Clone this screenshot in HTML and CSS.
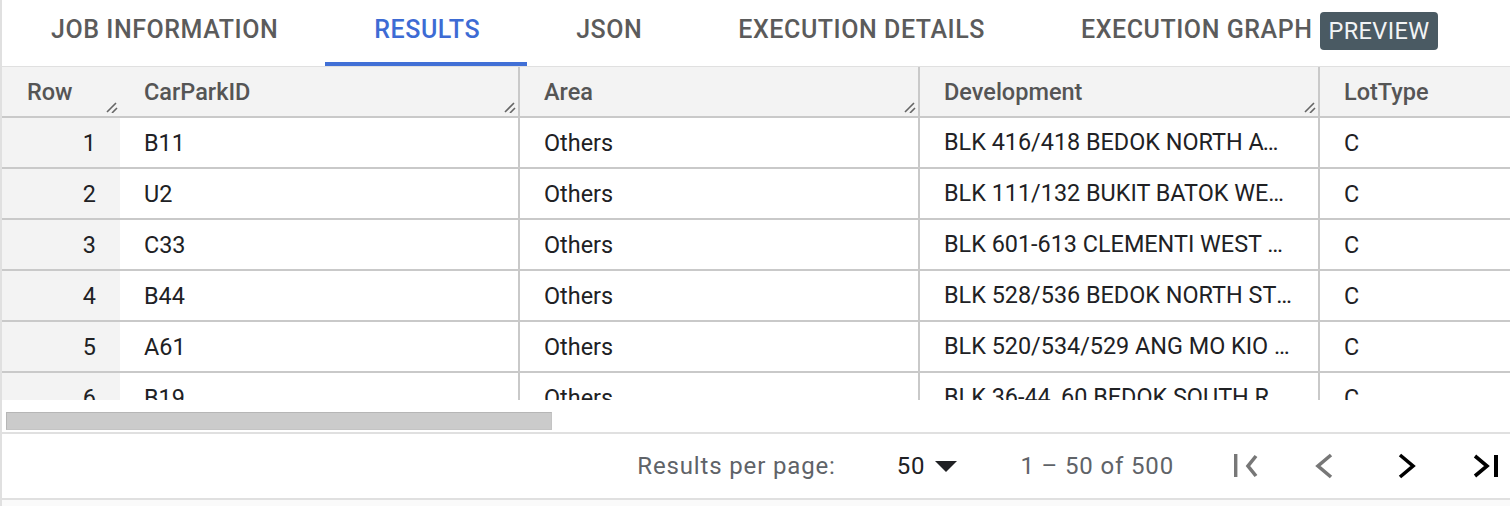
FILE: index.html
```html
<!DOCTYPE html>
<html lang="en">
<head>
<meta charset="utf-8">
<title>Query results</title>
<link rel="stylesheet" href="styles.css">
</head>
<body>
<div class="panel">
  <nav class="tabs">
    <div class="tab">JOB INFORMATION</div>
    <div class="tab active">RESULTS</div>
    <div class="tab">JSON</div>
    <div class="tab">EXECUTION DETAILS</div>
    <div class="tab">EXECUTION GRAPH<span class="badge">PREVIEW</span></div>
  </nav>

  <div class="grid-view">
    <div class="row head">
      <div class="cell num">Row<svg class="handle" viewBox="0 0 12 12"><path d="M1 11 L10 2 M6 12 L11 7"/></svg></div>
      <div class="cell c1">CarParkID<svg class="handle" viewBox="0 0 12 12"><path d="M1 11 L10 2 M6 12 L11 7"/></svg></div>
      <div class="cell c2">Area<svg class="handle" viewBox="0 0 12 12"><path d="M1 11 L10 2 M6 12 L11 7"/></svg></div>
      <div class="cell c3">Development<svg class="handle" viewBox="0 0 12 12"><path d="M1 11 L10 2 M6 12 L11 7"/></svg></div>
      <div class="cell c4">LotType</div>
    </div>
    <div class="row"><div class="cell num">1</div><div class="cell c1">B11</div><div class="cell c2">Others</div><div class="cell c3 trunc">BLK 416/418 BEDOK NORTH AVENUE 2</div><div class="cell c4">C</div></div>
    <div class="row"><div class="cell num">2</div><div class="cell c1">U2</div><div class="cell c2">Others</div><div class="cell c3 trunc">BLK 111/132 BUKIT BATOK WEST AVENUE 6</div><div class="cell c4">C</div></div>
    <div class="row"><div class="cell num">3</div><div class="cell c1">C33</div><div class="cell c2">Others</div><div class="cell c3 trunc">BLK 601-613 CLEMENTI WEST STREET 1</div><div class="cell c4">C</div></div>
    <div class="row"><div class="cell num">4</div><div class="cell c1">B44</div><div class="cell c2">Others</div><div class="cell c3 trunc">BLK 528/536 BEDOK NORTH STREET 3</div><div class="cell c4">C</div></div>
    <div class="row"><div class="cell num">5</div><div class="cell c1">A61</div><div class="cell c2">Others</div><div class="cell c3 trunc">BLK 520/534/529 ANG MO KIO AVENUE 10</div><div class="cell c4">C</div></div>
    <div class="row"><div class="cell num">6</div><div class="cell c1">B19</div><div class="cell c2">Others</div><div class="cell c3 trunc">BLK 36-44, 60 BEDOK SOUTH ROAD</div><div class="cell c4">C</div></div>
  </div>

  <div class="hscroll"><div class="thumb"></div></div>

  <footer class="pager">
    <span class="muted">Results per page:</span>
    <span class="size">50<svg class="caret" viewBox="0 0 22 11"><path d="M0 0 H22 L11 11 Z"/></svg></span>
    <span class="muted range">1 – 50 of 500</span>
    <svg class="pg disabled first" viewBox="0 0 30 30"><rect x="4" y="3" width="3.4" height="23"/><polyline points="26,5 18,15 26,25"/></svg>
    <svg class="pg disabled" viewBox="0 0 30 30"><polyline points="21,4 8,15 21,26"/></svg>
    <svg class="pg" viewBox="0 0 30 30"><polyline points="10,4 23,15 10,26"/></svg>
    <svg class="pg" viewBox="0 0 30 30"><polyline points="5,5 17,15 5,25"/><rect x="24" y="4" width="4" height="22"/></svg>
  </footer>
</div>
</body>
</html>
```

FILE: styles.css
```css
* { box-sizing: border-box; }
html, body { margin: 0; padding: 0; background: #ffffff; }
body {
  font-family: Roboto, "Liberation Sans", Arial, sans-serif;
  width: 1510px;
  height: 506px;
  overflow: hidden;
}
.panel {
  border-left: 2px solid #e0e0e0;
  height: 506px;
  background: #fafafa;
}

/* tabs */
.tabs {
  display: flex;
  height: 67px;
  background: #fff;
  border-bottom: 1px solid #e0e0e0;
}
.tab {
  display: flex;
  align-items: center;
  padding: 0 47px 4px 49px;
  height: 66px;
  border-bottom: 4px solid transparent;
  font-size: 25px;
  font-weight: 500;
  letter-spacing: 0.55px;
  color: #5b5b5b;
  white-space: nowrap;
}
.tab.active {
  color: #3d6bd4;
  border-bottom-color: #4170d6;
}
.badge {
  margin-left: 8px;
  background: #4a5a63;
  color: #f2f4f5;
  border-radius: 4px;
  font-weight: 400;
  font-size: 23.5px;
  letter-spacing: 0.4px;
  padding: 0 8px 0 8px;
  height: 38px;
  line-height: 38px;
  margin-top: 3px;
}

/* grid */
.grid-view {
  height: 333px;
  overflow: hidden;
  background: #fff;
  width: 1508px;
}
.row {
  display: flex;
  height: 51px;
  border-bottom: 2px solid #c9c9c9;
  width: 1800px;
  font-size: 23.4px;
  color: #202124;
}
.cell {
  display: flex;
  align-items: center;
  padding-left: 24px;
  padding-right: 24px;
  height: 100%;
  white-space: nowrap;
  flex: none;
}
.num {
  width: 118px;
  background: #f3f3f3;
  justify-content: flex-end;
  padding-right: 24px;
}
.c1 { width: 398px; }
.c2, .c3, .c4 { width: 400px; border-left: 2px solid #c9c9c9; }
.cell.trunc {
  display: block;
  line-height: 48px;
  overflow: hidden;
  text-overflow: ellipsis;
  padding-right: 26px;
}
.head {
  background: #f3f3f3;
  color: #555;
  font-weight: 500;
  font-size: 23.5px;
}
.head .cell { position: relative; padding-top: 1px; }
.head .num { justify-content: flex-start; padding-left: 25px; }
.handle {
  position: absolute;
  right: 2px;
  bottom: 3px;
  width: 12px;
  height: 12px;
  fill: none;
  stroke: #666;
  stroke-width: 1.6;
}

/* horizontal scroll */
.hscroll {
  height: 34px;
  padding: 12px 0 0 4px;
  background: #fff;
  border-bottom: 2px solid #e0e0e0;
}
.thumb {
  width: 546px;
  height: 18px;
  background: #cbcbcb;
  border: 1px solid #b6b6b6;
  border-right-color: #c4c4c4;
  border-bottom-color: #c4c4c4;
}

/* pager */
.pager {
  display: flex;
  align-items: center;
  justify-content: flex-end;
  height: 66px;
  background: #fff;
  border-bottom: 2px solid #e0e0e0;
  padding-right: 10px;
  font-size: 24px;
  letter-spacing: 0.85px;
  color: #202124;
}
.muted { color: #5f6368; }
.size {
  display: flex;
  align-items: center;
  margin-left: 61px;
}
.caret {
  width: 22px;
  height: 11px;
  margin-left: 10px;
  fill: #202124;
}
.range { margin-left: 63px; }
.pg {
  width: 30px;
  height: 30px;
  margin-left: 50px;
  fill: none;
  stroke: #000;
  stroke-width: 3.6;
}
.pg rect { fill: #000; stroke: none; }
.pg.disabled { stroke: #777; }
.pg.disabled rect { fill: #777; }
.pg.first { margin-left: 56px; }
```
